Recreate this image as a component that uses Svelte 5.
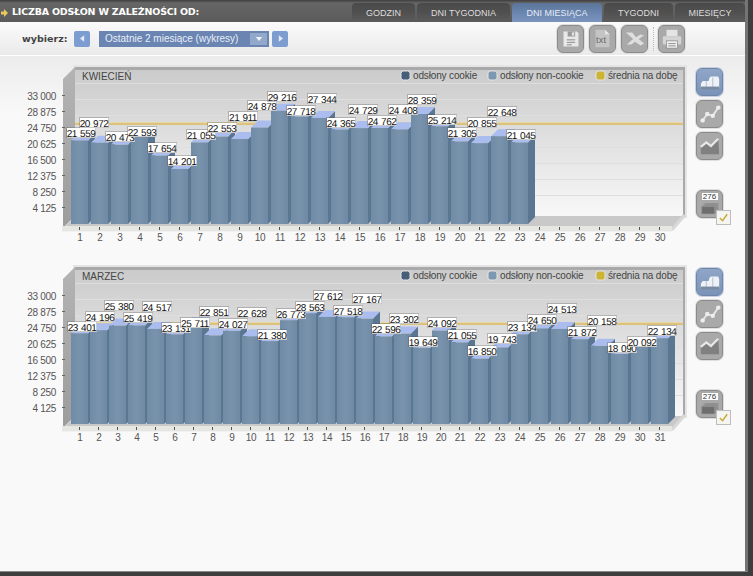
<script>
  const april = {
    id: 'kw',
    title: 'KWIECIEŃ',
    slots: 30,
    bars: [
      ['21 559', 81, 133], ['20 972', 94, 123], ['20 473', 120, 137], ['22 593', 142, 132], ['17 654', 162, 148],
      ['14 201', 182, 161], ['21 055', 201, 135], ['22 553', 222, 128], ['21 911', 243, 117], ['24 878', 262, 106],
      ['29 216', 282, 97], ['27 718', 301, 111], ['27 344', 322, 99], ['24 365', 341, 123], ['24 729', 363, 110],
      ['24 762', 382, 121], ['24 408', 403, 110], ['28 359', 422, 100], ['25 214', 442, 120], ['21 305', 462, 133],
      ['20 855', 482, 123], ['22 648', 502, 112], ['21 045', 521, 135]
    ],
    xpos: (i) => 80 + 20 * (i - 1)
  };

  const march = {
    id: 'mr',
    title: 'MARZEC',
    slots: 31,
    bars: [
      ['23 401', 82, 127], ['24 196', 100, 117], ['25 380', 119, 106], ['25 419', 138, 118], ['24 517', 157, 107],
      ['23 131', 176, 128], ['25 711', 195, 123], ['22 851', 214, 112], ['24 027', 233, 124], ['22 628', 252, 113],
      ['21 380', 272, 135], ['26 773', 291, 114], ['28 563', 310, 107], ['27 612', 328, 96], ['27 518', 348, 111],
      ['27 167', 367, 99], ['22 596', 386, 129], ['23 302', 404, 119], ['19 649', 423, 142], ['24 092', 442, 123],
      ['21 055', 462, 135], ['16 850', 482, 151], ['19 743', 502, 139], ['23 134', 522, 127], ['24 650', 542, 120],
      ['24 513', 562, 109], ['21 872', 582, 132], ['20 158', 602, 121], ['18 090', 622, 148], ['20 092', 642, 142],
      ['22 134', 662, 131]
    ],
    xpos: (i) => (i <= 20 ? 80 + 19 * (i - 1) : 460 + 20 * (i - 21))
  };

  const yticks = ['33 000', '28 875', '24 750', '20 625', '16 500', '12 375', '8 250', '4 125'];
  const grid = [83, 99, 115, 131, 147, 163, 179, 195];
  const tabs = ['GODZIN', 'DNI TYGODNIA', 'DNI MIESIĄCA', 'TYGODNI', 'MIESIĘCY'];

  function topY(label) {
    return 224 - (Number(label.replace(' ', '')) * 16) / 4125;
  }

  function slots(n) {
    return Array.from({ length: n }, (_, i) => i + 1);
  }
</script>

{#snippet chart(c)}
  <div class="chart-row">
    <svg class="chart" viewBox="0 60 690 200" width="690" height="200">
      <defs>
        <linearGradient id="wall-{c.id}" x1="0" y1="0" x2="0" y2="1">
          <stop offset="0" stop-color="#cbcbcb" />
          <stop offset="1" stop-color="#f8f8f8" />
        </linearGradient>
        <linearGradient id="side-{c.id}" x1="0" y1="0" x2="0" y2="1">
          <stop offset="0" stop-color="#b4b4b4" />
          <stop offset="1" stop-color="#9c9c9c" />
        </linearGradient>
        <linearGradient id="front-{c.id}" x1="0" y1="0" x2="1" y2="0">
          <stop offset="0" stop-color="#6f8ba6" />
          <stop offset="0.5" stop-color="#7a93ad" />
          <stop offset="1" stop-color="#6f8aa5" />
        </linearGradient>
      </defs>

      <!-- walls and floor -->
      <rect x="73" y="65" width="614" height="153" fill="#e4e4e4" />
      <rect x="75" y="67" width="610" height="150" fill="#a9a9a9" />
      <rect x="75" y="70" width="608" height="147" fill="url(#wall-{c.id})" />
      <polygon points="63,79 75,67 75,216 63,228" fill="url(#side-{c.id})" />
      <polygon points="75,216 683,216 671,229 63,229" fill="#c9c9c9" />
      <polygon points="683,214 686,216 673,231 671,229" fill="#d8d8d8" />
      <rect x="62" y="226" width="610" height="5" fill="#e6e6e2" />
      <rect x="62" y="231" width="610" height="1" fill="#f2f2f2" />

      {#each grid as y}
        <rect x="75" {y} width="608" height="1" fill="#dedede" />
      {/each}
      <rect x="75" y="122" width="608" height="3" fill="#dcc27a" />
      <rect x="75" y="122" width="608" height="1" fill="#e6d8a8" />

      <text class="cap" x="82" y="79.5">{c.title}</text>

      <!-- legend -->
      <rect class="dot" x="401" y="71" width="9" height="9" rx="2.5" fill="#465e78" />
      <text class="leg" x="413" y="79">odsłony cookie</text>
      <rect class="dot" x="488" y="71" width="9" height="9" rx="2.5" fill="#7e97b2" />
      <text class="leg" x="500" y="79">odsłony non-cookie</text>
      <rect class="dot" x="596" y="71" width="9" height="9" rx="2.5" fill="#cdb433" />
      <text class="leg" x="608" y="79">średnia na dobę</text>

      <!-- y axis -->
      {#each yticks as t, i}
        <text class="tick" x="56" y={100 + 16 * i} text-anchor="end">{t}</text>
        <rect x="62" y={95 + 16 * i} width="3" height="1" fill="#666" />
      {/each}

      <!-- bars -->
      {#each c.bars as b, i}
        {@const x = c.xpos(i + 1) - 9}
        {@const y = topY(b[0])}
        <polygon points="{x + 17},{y} {x + 24},{y - 7} {x + 24},217 {x + 17},224" fill="#5b7691" />
        <polygon points="{x},{y} {x + 7},{y - 7} {x + 24},{y - 7} {x + 17},{y}" fill="#abbdee" />
        <rect {x} {y} width="17" height={224 - y} fill="url(#front-{c.id})" />
      {/each}

      <!-- x axis -->
      {#each slots(c.slots) as n}
        <rect x={c.xpos(n) - 1} y="227" width="1" height="3" fill="#555" />
        <text class="tick" x={c.xpos(n)} y="241" text-anchor="middle">{n}</text>
      {/each}

      <!-- value labels -->
      {#each c.bars as b}
        <rect class="lab-box" x={b[1] - 14.5} y={b[2] - 5.5} width="29" height="10" />
        <text class="lab" x={b[1]} y={b[2] + 3.5} text-anchor="middle">{b[0]}</text>
      {/each}
    </svg>

    <div class="side">
      <button class="ibtn on" aria-label="słupki">
        <svg viewBox="0 0 24 24" width="22" height="22">
          <path d="M2 14l2-3h6l1-1V8l2-2h8l1 3v10H2z" fill="#eef1f6" />
          <path d="M8 11v8M15 7v12" stroke="#b8c4d8" stroke-width="1.2" />
          <rect x="2" y="17" width="20" height="3" fill="#7b8aa3" />
        </svg>
      </button>
      <button class="ibtn" aria-label="linia">
        <svg viewBox="0 0 24 24" width="22" height="22">
          <path d="M4 19l5-7 6 2 6-9" fill="none" stroke="#e8e8e8" stroke-width="2" />
          <g fill="#eeeeee"><circle cx="4" cy="19" r="2.4" /><circle cx="9" cy="12" r="2.4" /><circle cx="15" cy="14" r="2.4" /><circle cx="21" cy="5" r="2.4" /></g>
        </svg>
      </button>
      <button class="ibtn" aria-label="obszar">
        <svg viewBox="0 0 24 24" width="22" height="22">
          <path d="M2 21v-8l6-5 5 4 8-8 1 17z" fill="#808080" />
          <path d="M2 13l6-5 5 4 8-8" fill="none" stroke="#e8e8e8" stroke-width="2.4" />
        </svg>
      </button>
      <div class="gap"></div>
      <div class="opt">
        <button class="ibtn" aria-label="wartości">
          <span class="num">276</span>
          <svg viewBox="0 0 24 16" width="22" height="15">
            <path d="M3 7l4-4h14v9l-4 3H3z" fill="#8f8f8f" />
            <path d="M3 7h14v8H3zM17 7l4-4" fill="#6e6e6e" stroke="#9b9b9b" stroke-width="0.6" />
          </svg>
        </button>
        <span class="check">
          <svg viewBox="0 0 12 12" width="11" height="11"><path d="M2 6.5l3 3 5-7" fill="none" stroke="#c9a93c" stroke-width="1.6" /></svg>
        </span>
      </div>
    </div>
  </div>
{/snippet}

<div class="page">
  <header class="head">
    <svg class="bullet" viewBox="0 0 7 8" width="7" height="8"><path d="M0 2.5h3V0l4 4-4 4V5.500H0z" fill="#e8c85a" /></svg>
    <h1>LICZBA ODSŁON W ZALEŻNOŚCI OD:</h1>
    <nav class="tabs">
      {#each tabs as t, i}
        <span class="tab t{i}" class:active={i === 2}>{t}</span>
      {/each}
    </nav>
  </header>

  <div class="toolbar">
    <span class="pick">wybierz:</span>
    <button class="arrow" aria-label="poprzedni">
      <svg viewBox="0 0 6 8" width="5" height="7"><path d="M5 0v8L0 4z" fill="#e4eaf6" /></svg>
    </button>
    <div class="select">
      <span>Ostatnie 2 miesiące (wykresy)</span>
      <b><svg viewBox="0 0 8 5" width="8" height="4"><path d="M0 0h8L4 5z" fill="#eef2fa" /></svg></b>
    </div>
    <button class="arrow next" aria-label="następny">
      <svg viewBox="0 0 6 8" width="5" height="7"><path d="M1 0v8l5-4z" fill="#e4eaf6" /></svg>
    </button>

    <div class="tools">
      <button class="ibtn" aria-label="zapisz">
        <svg viewBox="0 0 24 24" width="20" height="20">
          <path d="M3 3h16l2 2v16H3z" fill="#e8e8e8" />
          <rect x="8" y="3" width="9" height="6" fill="#9a9a9a" />
          <rect x="13" y="4" width="3" height="4" fill="#e0e0e0" />
          <path d="M7 13h10M7 16h10M7 19h6" stroke="#8c8c8c" stroke-width="1.2" />
        </svg>
      </button>
      <button class="ibtn" aria-label="txt">
        <svg viewBox="0 0 24 24" width="21" height="21">
          <path d="M4 2h11l5 5v15H4z" fill="#c4c4c4" />
          <path d="M15 2v5h5z" fill="#e8e8e8" />
        </svg>
        <span class="txt">txt</span>
      </button>
      <button class="ibtn" aria-label="xls">
        <svg viewBox="0 0 24 24" width="22" height="22">
          <path d="M2 5h7l4 5 5-3 4 1-6 4 6 5-4 2-6-4-4 3H3l7-6z" fill="#dedede" />
        </svg>
      </button>
      <i class="sep"></i>
      <button class="ibtn" aria-label="drukuj">
        <svg viewBox="0 0 24 24" width="22" height="22">
          <rect x="6" y="2" width="12" height="7" fill="#e4e4e4" />
          <rect x="2" y="9" width="20" height="9" rx="1" fill="#d4d4d4" />
          <rect x="6" y="14" width="12" height="8" fill="#eeeeee" stroke="#8a8a8a" stroke-width="0.8" />
          <path d="M8 17h8M8 19.500h8" stroke="#8a8a8a" />
        </svg>
      </button>
    </div>
  </div>

  <main class="body">
    {@render chart(april)}
    {@render chart(march)}
  </main>
</div>

<style>
  :global(body) {
    margin: 0;
    background: #3e3e3e;
  }

  .page {
    width: 748px;
    height: 572px;
    box-sizing: border-box;
    border-right: 3px solid #747474;
    border-bottom: 1px solid #8a8a8a;
    display: flex;
    flex-direction: column;
    background: #f9f9f9;
    font-family: 'Liberation Sans', sans-serif;
    overflow: hidden;
  }

  .head {
    height: 22px;
    flex: none;
    display: flex;
    align-items: flex-end;
    background: linear-gradient(#3e3e3e 0, #666 3px, #5a5a5a 100%);
    color: #fff;
  }

  .bullet {
    margin: 0 4px 5px 1px;
    flex: none;
  }

  h1 {
    margin: 0 0 5px;
    font: bold 9.5px 'DejaVu Sans', sans-serif;
    letter-spacing: -0.2px;
    white-space: nowrap;
  }

  .tabs {
    margin-left: auto;
    display: flex;
    gap: 2px;
  }

  .tab {
    height: 19px;
    box-sizing: border-box;
    padding-top: 5px;
    text-align: center;
    font-size: 9px;
    color: #dedede;
    background: linear-gradient(#4a4a4a, #505050 50%, #5c5c5c);
    border-radius: 4px 4px 0 0;
  }

  .t0 { width: 63px; }
  .t1 { width: 93px; }
  .t2 { width: 90px; }
  .t3 { width: 69px; }
  .t4 { width: 70px; }

  .active {
    background: linear-gradient(#5b7499, #6d88b2 60%, #7a94bc);
    color: #e6ecf6;
  }

  .toolbar {
    height: 34px;
    flex: none;
    box-sizing: border-box;
    display: flex;
    align-items: center;
    padding: 0 60px 0 22px;
    background: linear-gradient(#fbfbfb, #eaeaea);
    border-bottom: 1px solid #fff;
  }

  .pick {
    font: bold 9.5px 'DejaVu Sans', sans-serif;
    color: #444;
    width: 52px;
  }

  .arrow {
    width: 16px;
    height: 16px;
    padding: 0;
    border: 0;
    border-radius: 2px;
    background: #7d9dd0;
    display: flex;
    align-items: center;
    justify-content: center;
  }

  .next {
    margin-left: 3px;
  }

  .select {
    margin-left: 9px;
    width: 170px;
    height: 16px;
    display: flex;
    align-items: center;
    justify-content: space-between;
    background: #6a85b2;
    color: #e8eef8;
    font-size: 10px;
    padding-left: 6px;
    box-sizing: border-box;
  }

  .select b {
    width: 17px;
    height: 12px;
    margin-right: 2px;
    background: #93a9cc;
    display: flex;
    align-items: center;
    justify-content: center;
  }

  .tools {
    margin-left: auto;
    display: flex;
    align-items: center;
    gap: 5px;
  }

  .sep {
    height: 24px;
    border-left: 1px dotted #bbb;
    margin-right: -1px;
  }

  .ibtn {
    position: relative;
    width: 27px;
    height: 28px;
    padding: 0;
    box-sizing: border-box;
    border: 1px solid #8b8b8b;
    border-radius: 6px;
    background: #a9a9a9;
    box-shadow: 0 0 0 1px #dedede;
    display: flex;
    align-items: center;
    justify-content: center;
    flex-direction: column;
  }

  .ibtn.on {
    background: linear-gradient(#8fa6c8, #7b93b8);
    border-color: #6f86a8;
    box-shadow: 0 0 0 1px #c5d0e0;
  }

  .txt {
    position: absolute;
    left: 6px;
    top: 9px;
    font-size: 9px;
    letter-spacing: 0.3px;
    color: #666;
  }

  .body {
    flex: 1;
    background: linear-gradient(#ececec, #f9f9f9 60px);
    padding-top: 4px;
  }

  .chart-row {
    height: 200px;
    display: flex;
  }

  .chart {
    display: block;
    flex: none;
  }

  .side {
    margin-left: 6px;
    padding-top: 8px;
    display: flex;
    flex-direction: column;
    gap: 4px;
  }

  .gap {
    height: 22px;
  }

  .opt {
    position: relative;
  }

  .num {
    background: #fff;
    color: #333;
    font-size: 8px;
    line-height: 7px;
    width: 16px;
    margin-top: -1px;
  }

  .check {
    position: absolute;
    right: -8px;
    bottom: -7px;
    width: 13px;
    height: 13px;
    background: #f4f4f0;
    border: 1px solid #bdbdbd;
    display: flex;
    align-items: center;
    justify-content: center;
  }

  svg text {
    font-family: 'Liberation Sans', sans-serif;
  }

  .cap {
    font-size: 10px;
    fill: #444;
  }

  .leg {
    font-size: 10px;
    letter-spacing: -0.15px;
    fill: #444;
  }

  .dot {
    stroke: #e4e4e4;
    stroke-width: 1;
  }

  .tick {
    font-size: 10px;
    letter-spacing: -0.3px;
    fill: #555;
  }

  .lab-box {
    fill: #fff;
    stroke: rgba(80, 80, 80, 0.3);
    stroke-width: 1;
    shape-rendering: crispEdges;
  }

  .lab {
    font-size: 10px;
    letter-spacing: -0.5px;
    word-spacing: 1px;
    text-rendering: geometricPrecision;
    fill: #111;
  }
</style>
